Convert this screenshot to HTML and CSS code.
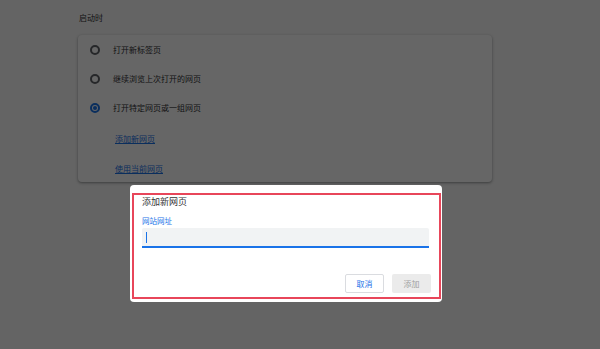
FILE: index.html
```html
<!DOCTYPE html>
<html lang="zh-CN">
<head>
    <meta charset="UTF-8">
    <meta name="viewport" content="width=device-width, initial-scale=1.0">
    <title>设置 - 启动时</title>
    <link rel="stylesheet" href="styles.css">
</head>
<body>
    <div class="page">
        <div class="section-title">启动时</div>
        <div class="card">
            <div class="radio-row">
                <span class="radio"></span>
                <span>打开新标签页</span>
            </div>
            <div class="radio-row">
                <span class="radio"></span>
                <span>继续浏览上次打开的网页</span>
            </div>
            <div class="radio-row">
                <span class="radio checked"></span>
                <span>打开特定网页或一组网页</span>
            </div>
            <div class="link-row first"><a href="#">添加新网页</a></div>
            <div class="link-row second"><a href="#">使用当前网页</a></div>
        </div>
    </div>

    <div class="overlay"></div>

    <div class="dialog">
        <div class="dialog-title">添加新网页</div>
        <div class="field-label">网站网址</div>
        <div class="field-input"><span class="caret"></span></div>
        <div class="dialog-buttons">
            <button class="btn cancel">取消</button>
            <button class="btn add" disabled>添加</button>
        </div>
        <div class="highlight"></div>
    </div>
</body>
</html>
```

FILE: styles.css
```css
body {
    margin: 0;
    font-family: "Noto Sans CJK SC", "Noto Sans", sans-serif;
    background-color: #fafafa;
    color: #303134;
    height: 349px;
    overflow: hidden;
}
.page {
    padding: 12px 0 0 78px;
}
.section-title {
    font-size: 8px;
    line-height: 11px;
    padding-left: 1px;
}
.card {
    margin-top: 12px;
    width: 414px;
    background: white;
    border-radius: 4px;
    box-shadow: 0 1px 2px rgba(60,64,67,0.35), 0 1px 3px 1px rgba(60,64,67,0.15);
}
.radio-row {
    display: flex;
    align-items: center;
    height: 29px;
    padding-left: 12px;
    font-size: 8px;
}
.radio {
    width: 6px;
    height: 6px;
    border: 2px solid #5f6368;
    border-radius: 50%;
    margin-right: 13px;
    position: relative;
}
.radio.checked {
    border-color: #1a73e8;
}
.radio.checked::after {
    content: "";
    position: absolute;
    left: 1px;
    top: 1px;
    width: 4px;
    height: 4px;
    border-radius: 50%;
    background: #1a73e8;
}
.link-row {
    padding-left: 37px;
    font-size: 8px;
    line-height: 12px;
}
.link-row.first {
    padding-top: 11px;
}
.link-row.second {
    padding-top: 18px;
    padding-bottom: 7px;
}
.link-row a {
    color: #1a73e8;
}
.overlay {
    position: fixed;
    inset: 0;
    background: rgba(0,0,0,0.6);
}
.dialog {
    position: fixed;
    left: 130px;
    top: 185px;
    width: 287px;
    height: 117px;
    padding: 0 13px 0 12px;
    background: white;
    border-radius: 4px;
    box-sizing: content-box;
}
.dialog-title {
    padding-top: 11px;
    font-size: 9px;
    line-height: 12px;
    color: #333;
}
.field-label {
    margin-top: 8px;
    font-size: 7.5px;
    line-height: 10px;
    color: #1a73e8;
}
.field-input {
    margin-top: 2px;
    height: 18px;
    background: #f1f3f4;
    border-bottom: 2px solid #1a73e8;
    border-radius: 2px 2px 0 0;
    display: flex;
    align-items: center;
    padding-left: 4px;
}
.caret {
    width: 1px;
    height: 11px;
    background: #1a73e8;
}
.dialog-buttons {
    display: flex;
    justify-content: flex-end;
    gap: 8px;
    margin-top: 26px;
    margin-right: -2px;
}
.btn {
    width: 39px;
    height: 19px;
    font-family: inherit;
    font-size: 8px;
    border-radius: 2px;
    padding: 0;
}
.btn.cancel {
    background: white;
    color: #1a73e8;
    border: 1px solid #dadce0;
}
.btn.add {
    background: #ebebeb;
    color: #a0a0a0;
    border: none;
}
.highlight {
    position: absolute;
    left: 2px;
    top: 8px;
    right: 1px;
    bottom: 3px;
    border: 2px solid #e8465a;
}
```
